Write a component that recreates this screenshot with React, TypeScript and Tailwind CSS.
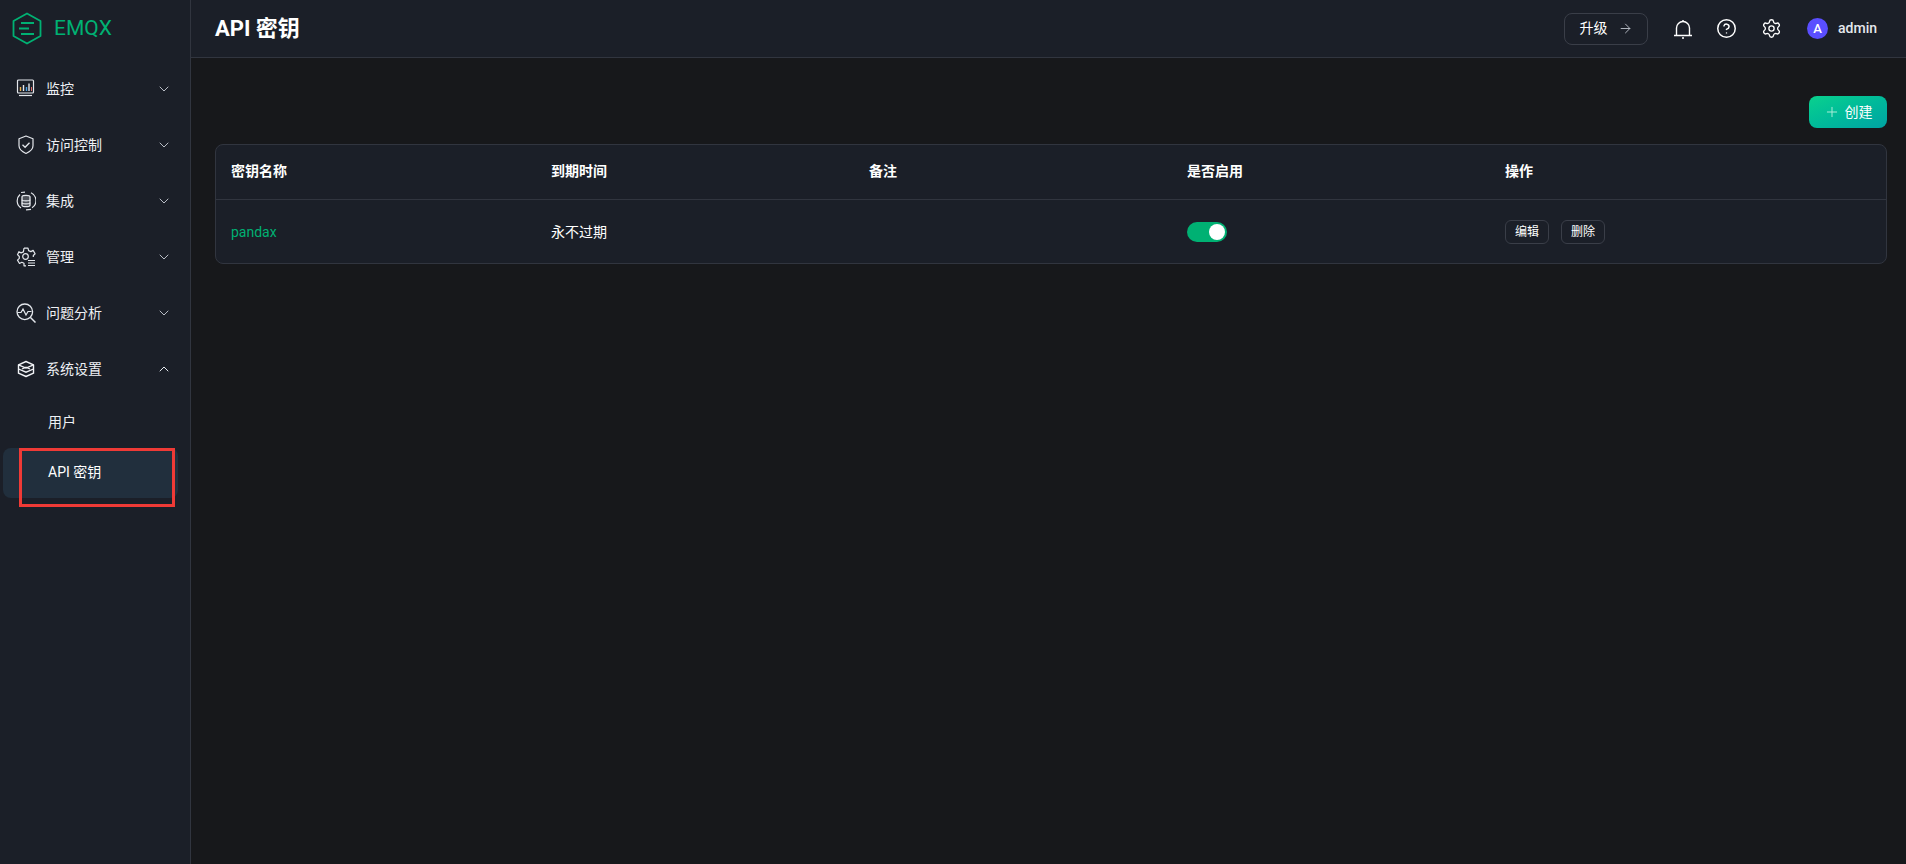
import React from "react";
import { ChevronDown, ChevronUp, CircleHelp, Settings, ArrowRight, Plus } from "lucide-react";

const font = { fontFamily: '"Roboto","Noto Sans CJK SC",sans-serif' };

const IconMonitor = () => (
  <svg width="20" height="20" viewBox="0 0 20 20" fill="none">
    <rect x="1.500" y="1" width="16" height="13" rx="1" stroke="#e4e7ec" strokeWidth="1.200" />
    <path d="M4.500 12V8" stroke="#e8b04a" strokeWidth="1.400" />
    <path d="M7.500 12V6" stroke="#e4e7ec" strokeWidth="1.400" />
    <path d="M10.500 12V8" stroke="#4aa3e8" strokeWidth="1.400" />
    <path d="M13 12V4.500" stroke="#e4e7ec" strokeWidth="1.400" />
    <path d="M15.500 12V8" stroke="#e06a6a" strokeWidth="1" />
    <path d="M3 16.500h13" stroke="#e4e7ec" strokeWidth="1.200" />
  </svg>
);
const IconShield = () => (
  <svg width="20" height="20" viewBox="0 0 20 20" fill="none">
    <path d="M10 1l7 2.800v7c0 3.500-3.200 6-7 7.700-3.800-1.700-7-4.200-7-7.700v-7z" stroke="#e4e7ec" strokeWidth="1.200" strokeLinejoin="round" />
    <path d="M6.500 9.800l2.600 2.500 4.400-4.600" stroke="#e4e7ec" strokeWidth="1.300" />
  </svg>
);
const IconIntegrate = () => (
  <svg width="20" height="20" viewBox="0 0 20 20" fill="none">
    <path d="M4 3.500A8.600 8.600 0 0 0 5 17M15 1.800a8.600 8.600 0 0 1 1 15" stroke="#e4e7ec" strokeWidth="1.200" />
    <path d="M5 1.500l4-.3M10 18.800l5-.5" stroke="#e4e7ec" strokeWidth="1.200" />
    <path d="M6 5.800c0-2 8-2 8 0v8.400c0 2-8 2-8 0z" fill="#e4e7ec" fillOpacity="0.25" stroke="#e4e7ec" strokeWidth="1.300" />
    <path d="M6 8.800c0 1.500 8 1.500 8 0M6 11.800c0 1.500 8 1.500 8 0" stroke="#e4e7ec" strokeWidth="1.200" />
  </svg>
);
const IconManage = () => (
  <svg width="20" height="20" viewBox="0 0 20 20" fill="none">
    <path d="M8 1.200h4l.6 2.400 2.300 1 2.200-1.200 2 3.400-1.800 1.700v1.500M10 18.800H8v-2.500l-2.200-1-2.300 1.200-2-3.400 1.800-1.800V9.500L1.500 7.700l1.400-3 2.200 1.200 2.300-1L8 1.200" stroke="#e4e7ec" strokeWidth="1.200" strokeLinejoin="round" />
    <circle cx="9.500" cy="9.500" r="2.800" stroke="#e4e7ec" strokeWidth="1.200" />
    <path d="M12 13.500h7M12 16h7M12 18.500h7" stroke="#e4e7ec" strokeWidth="1.200" />
  </svg>
);
const IconAnalyze = () => (
  <svg width="20" height="20" viewBox="0 0 20 20" fill="none">
    <circle cx="8.800" cy="8.800" r="7.800" stroke="#e4e7ec" strokeWidth="1.300" />
    <path d="M14.500 14.500L19.500 19.500" stroke="#e4e7ec" strokeWidth="1.500" />
    <path d="M1.500 9.500h3.500l2-3.500 3 6 2-3.500h3.500" stroke="#e4e7ec" strokeWidth="1.200" />
  </svg>
);
const IconLayers = () => (
  <svg width="20" height="20" viewBox="0 0 20 20" fill="none">
    <path d="M10 2.500l7.500 3.300v8.400L10 17.500l-7.500-3.300V5.800z" stroke="#f2f4f7" strokeWidth="1.400" strokeLinejoin="round" />
    <path d="M2.500 5.800L10 9l7.500-3.200M2.500 10L10 13.200 17.500 10" stroke="#f2f4f7" strokeWidth="1.300" />
    <path d="M6 10l4-1.800L14 10" stroke="#f2f4f7" strokeWidth="1.200" />
  </svg>
);

const menu = [
  { label: "监控", icon: <IconMonitor /> },
  { label: "访问控制", icon: <IconShield /> },
  { label: "集成", icon: <IconIntegrate /> },
  { label: "管理", icon: <IconManage /> },
  { label: "问题分析", icon: <IconAnalyze /> },
  { label: "系统设置", icon: <IconLayers />, open: true },
];

export default function App() {
  return (
    <div className="flex h-[864px] w-[1906px] overflow-hidden bg-[#17181b] text-white" style={font}>
      <aside className="flex w-[191px] shrink-0 flex-col border-r border-[#31353f] bg-[#1b1f28]">
        <div className="flex h-[57px] items-center gap-[12px] pl-[12px]">
          <svg width="30" height="33" viewBox="0 0 30 33" fill="none">
            <path d="M15 1.500L28.500 9v15L15 31.500 1.500 24V9z" stroke="#00b173" strokeWidth="1.800" strokeLinejoin="round" />
            <path d="M9 11h13M7 16.500h10M9 22h13" stroke="#00b173" strokeWidth="2" />
          </svg>
          <span className="text-[21px] leading-none font-normal text-[#00b173]">EMQX</span>
        </div>
        <nav className="flex flex-col pt-[4px]">
          {menu.map((m) => (
            <div key={m.label} className="flex h-[56px] items-center pl-[16px] pr-[18px]">
              <span className="flex w-[30px] shrink-0 items-center">{m.icon}</span>
              <span className="grow text-[14px] text-[#eef0f4]">{m.label}</span>
              {m.open ? (
                <ChevronUp size={16} strokeWidth={1.500} className="text-[#e4e7ec]" />
              ) : (
                <ChevronDown size={16} strokeWidth={1.500} className="text-[#b9bdc6]" />
              )}
            </div>
          ))}
          <div className="flex h-[51px] items-center pb-[1px] pl-[48px] text-[14px] text-[#eef0f4]">用户</div>
          <div className="relative ml-[3px] flex h-[50px] w-[175px] items-center rounded-[8px] bg-[#212f3d] pb-[1px] pl-[45px] text-[14px] text-white">
            API 密钥
            <div className="absolute left-[16px] top-0 h-[59px] w-[156px] border-[3px] border-[#ef3a36]" />
          </div>
        </nav>
      </aside>

      <div className="flex min-w-0 grow flex-col">
        <header className="flex h-[58px] shrink-0 items-center border-b border-[#31353f] bg-[#1b1f28] pl-[24px] pr-[29px]">
          <h1 className="grow text-[22px] leading-none font-bold">API 密钥</h1>
          <button className="mr-[25px] flex h-[32px] w-[84px] items-center justify-center gap-[10px] rounded-[8px] border border-[#3a3e48] text-[14px]">
            升级
            <ArrowRight size={15} strokeWidth={1.500} className="text-[#b9bdc6]" />
          </button>
          <svg width="20" height="22" viewBox="0 0 20 22" fill="none" className="mr-[23px]" stroke="#fff" strokeWidth="1.400">
            <path d="M1 17.500h18M3.500 17.500V10a6.500 6.500 0 0 1 13 0v7.500" />
            <path d="M10 3.500V2M9 20h2" />
          </svg>
          <CircleHelp size={21} strokeWidth={1.700} className="mr-[24px]" />
          <Settings size={21} strokeWidth={1.500} className="mr-[25px]" />
          <span className="mr-[10px] flex h-[21px] w-[21px] items-center justify-center rounded-full bg-[#5a4eff] text-[13px] font-medium">A</span>
          <span className="text-[14px] font-medium text-[#e4e7ec]">admin</span>
        </header>

        <main className="flex grow flex-col pl-[24px] pr-[19px] pt-[38px]">
          <div className="flex justify-end">
            <button className="flex h-[32px] w-[78px] items-center justify-center gap-[5px] rounded-[8px] bg-gradient-to-br from-[#0bd18d] to-[#00a3a3] text-[14px]">
              <Plus size={16} strokeWidth={1.500} className="text-[#a8ecd8]" />
              创建
            </button>
          </div>
          <div className="mt-[16px] overflow-hidden rounded-[8px] border border-[#31353f] bg-[#1b1f28] text-[14px]">
            <div className="grid h-[55px] grid-cols-[320px_318px_318px_318px_1fr] items-center border-b border-[#31353f] pb-[2px] font-bold">
              <div className="pl-[15px]">密钥名称</div>
              <div className="pl-[15px]">到期时间</div>
              <div className="pl-[15px]">备注</div>
              <div className="pl-[15px]">是否启用</div>
              <div className="pl-[15px]">操作</div>
            </div>
            <div className="grid h-[63px] grid-cols-[320px_318px_318px_318px_1fr] items-center">
              <div className="pl-[15px] pt-[1px] text-[#00b173]">pandax</div>
              <div className="pl-[15px] pt-[1px]">永不过期</div>
              <div className="pl-[15px]" />
              <div className="pl-[15px]">
                <div className="flex h-[20px] w-[40px] items-center justify-end rounded-full bg-[#00b173] pr-[2px]">
                  <div className="h-[16px] w-[16px] rounded-full bg-white" />
                </div>
              </div>
              <div className="flex gap-[12px] pl-[15px] text-[12px]">
                <button className="h-[24px] w-[44px] rounded-[6px] border border-[#3a3e48]">编辑</button>
                <button className="h-[24px] w-[44px] rounded-[6px] border border-[#3a3e48]">删除</button>
              </div>
            </div>
          </div>
        </main>
      </div>
    </div>
  );
}
